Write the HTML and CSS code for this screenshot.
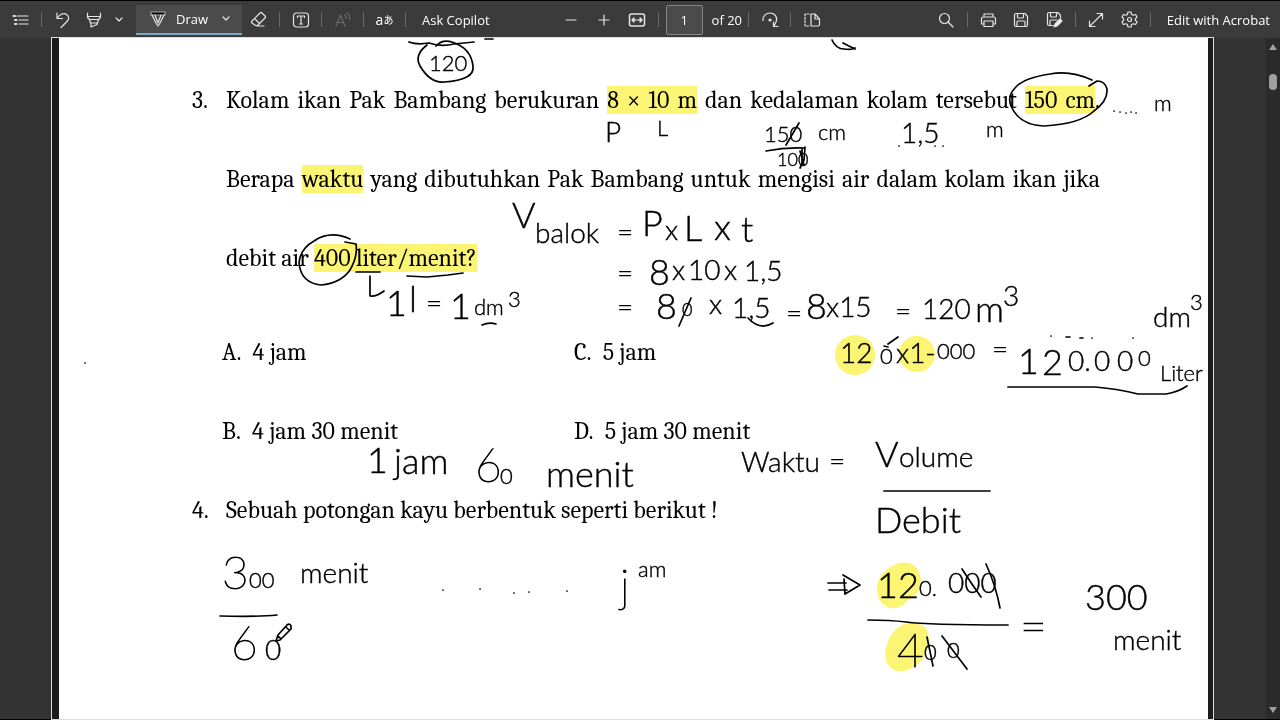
FILE: index.html
```html
<!DOCTYPE html>
<html lang="id">
<head>
    <meta charset="UTF-8">
    <meta name="viewport" content="width=device-width, initial-scale=1.0">
    <title>Latihan Soal Debit</title>
    <link rel="stylesheet" href="styles.css">
</head>
<body>
    <div class="viewer">
        <header class="toolbar">
            <div class="group">
                <button class="tool" aria-label="Contents"><svg width="18" height="16" viewBox="0 0 18 16"><path d="M5 4h11M7 8h9M7 12h9"/><path d="M1.500 4h1.500M3 8h1.500M3 12h1.500" stroke-width="2"/></svg></button>
                <span class="sep"></span>
                <button class="tool" aria-label="Undo"><svg width="16" height="18" viewBox="0 0 16 18"><path d="M2 2v5.500h5.500M2 7.500C5 3 9 1.500 11.500 3.500c3 2 2.500 5 .5 7L6 16.500"/></svg></button>
                <button class="tool narrow" aria-label="Highlight"><svg width="16" height="18" viewBox="0 0 16 18"><path d="M1.500 2v4.500l2 2h9l2-2V2M2 5.500h12M3.500 8.500l1 3.500h7l1-3.500M5 12v4l6-2.500V12"/></svg></button>
                <button class="chevron" aria-label="Highlight colors"><svg width="8" height="6" viewBox="0 0 8 6"><path d="M1 1l3 3 3-3"/></svg></button>
                <button class="draw">
                    <svg width="16" height="16" viewBox="0 0 16 16"><path d="M1 1h14v3H1z" fill="#000" stroke="#aaa"/><path d="M2 4l4.500 9L8 15l1.500-2L14 4M5 4l3 8 3-8"/></svg>
                    <span>Draw</span>
                    <svg class="down" width="8" height="6" viewBox="0 0 8 6"><path d="M1 1l3 3 3-3"/></svg>
                </button>
                <button class="tool" aria-label="Erase"><svg width="17" height="17" viewBox="0 0 17 17"><path d="M2 10l8-8q1-1 2 0l3 3q1 1 0 2l-7.500 7.500H5.500L2 12q-1-1 0-2zM4.500 7.500l5 5M7 15h7"/></svg></button>
                <span class="sep"></span>
                <button class="tool" aria-label="Add text"><svg width="18" height="16" viewBox="0 0 18 16"><rect x="1.500" y="1" width="15" height="14" rx="3"/><path d="M5.500 5.500V4h7v1.500M9 4v8M7.500 12h3"/></svg></button>
                <span class="sep"></span>
                <button class="tool off" aria-label="Read aloud"><svg width="18" height="16" viewBox="0 0 18 16"><path d="M2 14L6.500 3 11 14M3.500 10.500h6M10.500 3q2 1 1.500 3.500M13 1q3.500 2.500 2.500 6.500"/></svg></button>
                <span class="sep"></span>
                <button class="tool lang" aria-label="Translate">a<small>あ</small></button>
                <span class="sep"></span>
                <button class="label">Ask Copilot</button>
            </div>
            <div class="group middle">
                <button class="tool" aria-label="Zoom out"><svg width="14" height="14" viewBox="0 0 14 14"><path d="M2 7h10"/></svg></button>
                <button class="tool" aria-label="Zoom in"><svg width="14" height="14" viewBox="0 0 14 14"><path d="M2 7h10M7 2v10"/></svg></button>
                <button class="tool" aria-label="Fit to width"><svg width="18" height="16" viewBox="0 0 18 16"><rect x="1.500" y="2" width="15" height="12" rx="2" stroke-width="1.500"/><path d="M4 8h4M10 8h4M6 6L4 8l2 2M12 6l2 2-2 2" stroke-width="1.500"/></svg></button>
                <span class="sep"></span>
                <input class="page-number" type="text" value="1" aria-label="Page number">
                <span class="count">of 20</span>
                <span class="sep"></span>
                <button class="tool" aria-label="Rotate"><svg width="18" height="18" viewBox="0 0 18 18"><path d="M2 9.500C1.500 5 5 2 9 2c5 0 8 4.500 6 9l-2 4M12.500 11v4.500H17"/><circle cx="9" cy="9" r="1" fill="#eee"/></svg></button>
                <span class="sep"></span>
                <button class="tool" aria-label="Page view"><svg width="18" height="16" viewBox="0 0 18 16"><path d="M8 2v12h7q1.500 0 1.500-1.500V7L12 2zM12 2v5h4.500"/><path d="M6 2H2v12h4" stroke-dasharray="2 1.500"/></svg></button>
            </div>
            <div class="group right">
                <button class="tool" aria-label="Find"><svg width="16" height="16" viewBox="0 0 16 16"><circle cx="6.500" cy="6.500" r="5"/><path d="M10 10l5 5"/></svg></button>
                <span class="sep"></span>
                <button class="tool" aria-label="Print"><svg width="17" height="16" viewBox="0 0 17 16"><path d="M4 5V2h9v3M4 12H1.500V7q0-2 2-2h10q2 0 2 2v5H13M4 9h9v5.500H4z"/></svg></button>
                <button class="tool" aria-label="Save"><svg width="16" height="16" viewBox="0 0 16 16"><path d="M3 1.500h9l2.500 3V13q0 1.500-1.500 1.500H3q-1.500 0-1.500-1.500V3Q1.500 1.500 3 1.500zM4.500 1.500V5q0 1 1 1h4q1 0 1-1V1.500M4 14.500V10q0-1 1-1h6q1 0 1 1v4.500"/></svg></button>
                <button class="tool" aria-label="Save as"><svg width="17" height="17" viewBox="0 0 17 17"><path d="M7 14.500H3q-1.500 0-1.500-1.500V3Q1.500 1.500 3 1.500h9l2.500 3V7M4.500 1.500V5q0 1 1 1h4q1 0 1-1V1.500M4 14.500V10q0-1 1-1h6"/><path d="M8 16l1-3 5-5 2 2-5 5z" fill="#eee"/></svg></button>
                <span class="sep"></span>
                <button class="tool" aria-label="Full screen"><svg width="16" height="16" viewBox="0 0 16 16"><path d="M2 14L14 2M9 1.500h5.500V7M1.500 9v5.500H7"/></svg></button>
                <button class="tool" aria-label="Settings"><svg width="17" height="17" viewBox="0 0 17 17"><path d="M7 1h3l.6 2.500 1.500.8 2.500-.8L16 6l-1.700 1.800v1.400L16 11l-1.400 2.500-2.500-.8-1.500.8L10 16H7l-.6-2.500-1.500-.8-2.500.8L1 11l1.700-1.800V7.800L1 6l1.400-2.500 2.500.8 1.500-.8z"/><circle cx="8.500" cy="8.500" r="2"/></svg></button>
                <span class="sep"></span>
                <button class="label">Edit with Acrobat</button>
            </div>
        </header>

        <main class="desk">
            <article class="page">
                <div class="question">
                    <span class="number">3.</span>
                    <p>Kolam ikan Pak Bambang berukuran <mark>8 × 10 m</mark> dan kedalaman kolam tersebut <mark>150 cm</mark>. Berapa <mark>waktu</mark> yang dibutuhkan Pak Bambang untuk mengisi air dalam kolam ikan jika debit air <mark>400 liter/menit?</mark></p>
                </div>
                <div class="choices">
                    <span>A.&ensp;4 jam</span>
                    <span>C.&ensp;5 jam</span>
                    <span>B.&ensp;4 jam 30 menit</span>
                    <span>D.&ensp;5 jam 30 menit</span>
                </div>
                <div class="question">
                    <span class="number">4.</span>
                    <p>Sebuah potongan kayu berbentuk seperti berikut !</p>
                </div>
            </article>
            <div class="scrollbar">
                <span class="arrow up"></span>
                <span class="thumb"></span>
                <span class="arrow down-arrow"></span>
            </div>

            <!-- annotations written over the page -->
            <svg class="ink" viewBox="0 38 1280 681" width="1280" height="681">
                <g class="marker">
                    <circle cx="855" cy="355" r="20"/>
                    <circle cx="917" cy="354" r="18"/>
                    <path d="M877 586q2-12 12-18 14-9 25-3 9 8 6 22-4 10-13 14-7 9-18 7-13-6-12-22z"/>
                    <path d="M886 648q4-18 18-24 14-3 22 4 6 10 0 25-5 12-18 17-12 4-19-4-6-8-3-18z"/>
                </g>

                <g class="pen">
                    <path d="M409 42q8 3 20 1 12 4 25 1l20-2M485 39h8"/>
                    <path d="M427 45q-13 10-7 21 10 17 24 16 31-2 29-16-2-18-21-24-10-3-16 4"/>
                    <path d="M832 40q4 9 12 9 8 1 11-1M843 43l12 6"/>
                    <path d="M1092 80q-22-10-42-6-27 4-35 14-8 8-4 18 8 19 33 20 36-2 50-15 14-10 13-22-2-8-10-8l-8 5"/>
                    <path d="M350 239q-20-9-36 2-14 8-15 22 2 20 22 22 20-2 29-15 8-14 6-26l-11-2"/>
                    <path d="M356 272h24M407 276l20 1 21-2 15-2M370 276v20q6 1 14-5M482 325q7-3 14-1"/>
                    <path d="M766 151q20-4 39-3M786 145l13-22M805 147l-1 13-4 8M800 151l4 14M802 148v17"/>
                    <path d="M679 326l12-28M748 318q12 13 25 5M1008 387h87q24 2 43 7h28q12-2 21-8M888 344l10-7M884 346l4 1"/>
                    <path d="M884 491h106M220 616q38 1 57-1M868 620q22 0 38 2 21 3 102 3"/>
                    <path d="M828 583h18M829 590h18M843 575l17 10-15 9-1-15"/>
                    <path d="M962 569q9 14 19 28M986 564q10 22 14 44M927 637l6 29M942 636l25 33"/>
                    <path d="M276 641l2-6 9-10q3-2 4 1v3l-11 11zM278 636l3 3M286 627l3 3"/>
                </g>
                <g class="dots">
                    <path d="M1114 111h.1M1120 112h.1M1126 113h.1M1131 112h.1M1136 113h.1M899 146h.1M935 146h.1M943 146h.1"/>
                    <path d="M1051 336h.1M1066 337h4M1080 338h3M1092 338h.1M1133 338h.1M85 363h.1"/>
                    <path d="M443 590h.1M480 589h.1M514 593h.1M529 592h.1M567 591h.1"/>
                </g>

                <g class="tiny">
                    <text x="777" y="166">100</text>
                    <text x="682" y="316">0</text>
                </g>
                <g class="small">
                    <text x="429" y="71">120</text>
                    <text x="764" y="142">150</text>
                    <text x="818" y="140">cm</text>
                    <text x="657" y="136">L</text>
                    <text x="986" y="137">m</text>
                    <text x="1154" y="111">m</text>
                    <text x="880" y="364">0</text>
                    <text x="937" y="359">000</text>
                    <text x="1138" y="366">0</text>
                    <text x="1160" y="381">Liter</text>
                    <text x="500" y="484">0</text>
                    <text x="919" y="596">0.</text>
                    <text x="638" y="577">am</text>
                    <text x="249" y="588">00</text>
                    <text x="924" y="660">0</text>
                    <text x="947" y="658">0</text>
                    <text x="1190" y="310">3</text>
                    <text x="508" y="307">3</text>
                    <text x="474" y="315">dm</text>
                </g>
                <g class="medium">
                    <text x="605" y="142">P</text>
                    <text x="901" y="143">1,5</text>
                    <text x="535" y="243">balok</text>
                    <text x="617" y="242">=</text>
                    <text x="665" y="240">x</text>
                    <text x="617" y="283">=</text>
                    <text x="672" y="280">x</text>
                    <text x="688" y="280">10</text>
                    <text x="724" y="280">x</text>
                    <text x="744" y="281">1,5</text>
                    <text x="617" y="317">=</text>
                    <text x="709" y="314">x</text>
                    <text x="732" y="318">1,5</text>
                    <text x="786" y="323">=</text>
                    <text x="826" y="317">x15</text>
                    <text x="895" y="321">=</text>
                    <text x="922" y="319">120</text>
                    <text x="1003" y="306">3</text>
                    <text x="1153" y="327">dm</text>
                    <text x="426" y="313">=</text>
                    <text x="840" y="363">12</text>
                    <text x="896" y="363">x1-</text>
                    <text x="992" y="359">=</text>
                    <text x="1068" y="371">0.</text>
                    <text x="1094" y="371">0</text>
                    <text x="1117" y="371">0</text>
                    <text x="741" y="472">Waktu</text>
                    <text x="829" y="471">=</text>
                    <text x="899" y="467">olume</text>
                    <text x="300" y="583">menit</text>
                    <text x="265" y="660">0</text>
                    <text x="948" y="593">000</text>
                    <text x="1113" y="650">menit</text>
                </g>
                <g class="large">
                    <text x="386" y="316">1</text>
                    <text x="409" y="312">l</text>
                    <text x="450" y="319">1</text>
                    <text x="512" y="228">V</text>
                    <text x="642" y="236">P</text>
                    <text x="684" y="241">L</text>
                    <text x="714" y="240">x</text>
                    <text x="741" y="242">t</text>
                    <text x="649" y="285">8</text>
                    <text x="656" y="319">8</text>
                    <text x="806" y="319">8</text>
                    <text x="975" y="322">m</text>
                    <text x="1018" y="374">1</text>
                    <text x="1042" y="375">2</text>
                    <text x="367" y="473">1</text>
                    <text x="394" y="474">jam</text>
                    <text x="546" y="487">menit</text>
                    <text x="875" y="467">V</text>
                    <text x="875" y="533">Debit</text>
                    <text x="877" y="598">12</text>
                    <text x="1085" y="610">300</text>
                </g>
                <g class="huge">
                    <text x="475" y="482">6</text>
                    <text x="222" y="589">3</text>
                    <text x="620" y="602">j</text>
                    <text x="231" y="660">6</text>
                    <text x="897" y="667">4</text>
                    <text x="1020" y="643">=</text>
                </g>
            </svg>
        </main>
    </div>
</body>
</html>
```
FILE: styles.css
```css
:root {
    --bar: #3b3b3b;
    --desk: #333;
    --icon: #e4e4e4;
    --yellow: #fcf573;
}

* {
    margin: 0;
    padding: 0;
    box-sizing: border-box;
}

body {
    background: #000;
    overflow: hidden;
}

.viewer {
    display: flex;
    flex-direction: column;
    height: 100vh;
    padding: 1px 0;
}

/* toolbar */
.toolbar {
    display: flex;
    height: 37px;
    flex: none;
    background: var(--bar);
    font-family: "Open Sans", sans-serif;
    font-size: 13px;
    color: #fff;
    padding: 0 10px 0 4px;
}

.group {
    display: flex;
    align-items: center;
}

.middle {
    margin-left: 65px;
}

.right {
    margin-left: auto;
}

button {
    background: none;
    border: none;
    color: inherit;
    font: inherit;
    cursor: pointer;
}

.tool,
.chevron {
    display: flex;
    align-items: center;
    justify-content: center;
    width: 33px;
    height: 30px;
}

.narrow {
    width: 30px;
}

.chevron {
    width: 20px;
    margin-right: 7px;
}

.toolbar svg {
    fill: none;
    stroke: var(--icon);
    stroke-width: 1.2;
    stroke-linecap: round;
    stroke-linejoin: round;
}

.toolbar .off svg {
    stroke: #6c6c6c;
}

.sep {
    width: 1px;
    height: 15px;
    margin: 0 4px;
    background: #686868;
}

.draw {
    display: flex;
    align-items: center;
    gap: 10px;
    width: 106px;
    height: 30px;
    padding: 0 12px 0 14px;
    background: #4b4b4b;
    border-bottom: 2px solid #7ba6bf;
}

.draw .down {
    margin-left: auto;
}

.lang {
    font-size: 14px;
}

.lang small {
    font-family: "Noto Sans CJK JP", sans-serif;
    font-size: 10px;
}

.label {
    padding-left: 12px;
    white-space: nowrap;
}

.page-number {
    width: 37px;
    height: 30px;
    margin: 0 9px 0 3px;
    background: #4b4b4b;
    border: 1px solid #858585;
    border-radius: 2px;
    color: #fff;
    font: inherit;
    text-align: center;
}

.count {
    margin-right: 2px;
}

/* document */
.desk {
    position: relative;
    display: flex;
    flex: 1;
    min-height: 0;
    background: var(--desk);
    padding-left: 52px;
}

.page {
    flex: 1;
    background: #fff;
    border: solid #1c1c1c;
    border-width: 0 5px 0 7px;
    outline: 1px solid #ddd;
    padding: 23px 108px 0 133px;
    font-family: Cambria, Caladea, "Liberation Serif", serif;
    font-size: 24px;
    line-height: 79px;
    color: #000;
    overflow: hidden;
}

.question {
    display: flex;
}

.number {
    flex: none;
    width: 34px;
}

.question p {
    flex: 1;
    text-align: justify;
}

mark {
    background: var(--yellow);
    color: inherit;
}

.choices {
    display: grid;
    grid-template-columns: 352px 1fr;
    margin-top: 15px;
    padding-left: 30px;
}

.scrollbar {
    display: flex;
    flex-direction: column;
    align-items: center;
    width: 14px;
    margin-left: 53px;
    padding: 6px 0;
    background: #2b2b2b;
}

.arrow {
    border: 4px solid transparent;
}

.up {
    border-top: none;
    border-bottom: 6px solid #a0a0a0;
}

.down-arrow {
    margin-top: auto;
    border-bottom: none;
    border-top: 6px solid #a0a0a0;
}

.thumb {
    width: 8px;
    height: 16px;
    margin-top: 24px;
    border-radius: 4px;
    background: #a0a0a0;
}

/* ink layer, lies over the page text */
.ink {
    position: absolute;
    top: 0;
    left: 0;
    font-family: Lato, sans-serif;
    font-weight: 300;
    stroke: #000;
    stroke-width: .4;
    pointer-events: none;
}

.pen,
.dots {
    fill: none;
    stroke-width: 1.7;
    stroke-linecap: round;
    stroke-linejoin: round;
}

.marker {
    fill: var(--yellow);
    stroke: none;
    mix-blend-mode: multiply;
}

.tiny {
    font-size: 18px;
}

.small {
    font-size: 22px;
}

.medium {
    font-size: 28px;
}

.large {
    font-size: 36px;
}

.huge {
    font-size: 46px;
    font-weight: 100;
    stroke-width: 1;
}
```
